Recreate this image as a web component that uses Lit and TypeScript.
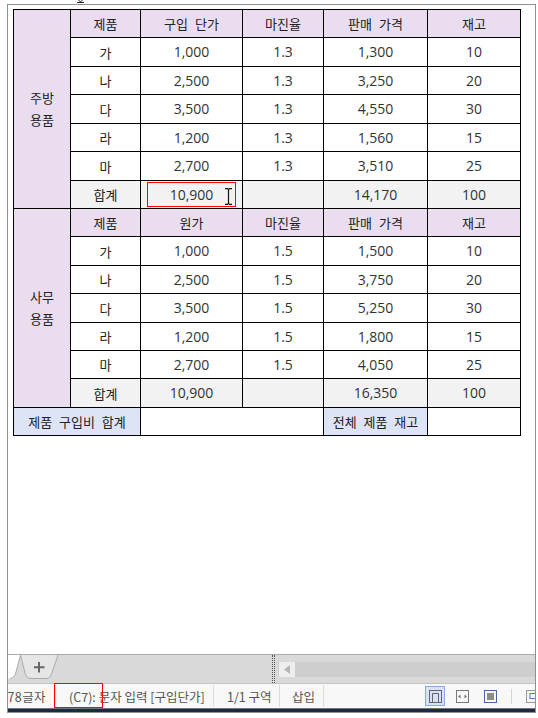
import { LitElement, html, css, svg } from "lit";
import { customElement } from "lit/decorators.js";

const kitchen = [
  ["가", "1,000", "1.3", "1,300", "10"],
  ["나", "2,500", "1.3", "3,250", "20"],
  ["다", "3,500", "1.3", "4,550", "30"],
  ["라", "1,200", "1.3", "1,560", "15"],
  ["마", "2,700", "1.3", "3,510", "25"],
];
const office = [
  ["가", "1,000", "1.5", "1,500", "10"],
  ["나", "2,500", "1.5", "3,750", "20"],
  ["다", "3,500", "1.5", "5,250", "30"],
  ["라", "1,200", "1.5", "1,800", "15"],
  ["마", "2,700", "1.5", "4,050", "25"],
];

@customElement("app-root")
export class AppRoot extends LitElement {
  static styles = css`
    :host {
      display: block;
      width: 538px;
      height: 718px;
      background: #fff;
      position: relative;
      overflow: hidden;
      font-family: "Noto Sans CJK KR", "Open Sans", sans-serif;
      color: #222;
    }
    .frame {
      position: absolute;
      inset: 4px 2px 5px 7px;
      border: 1px solid #8f8f8f;
      display: flex;
      flex-direction: column;
      box-sizing: border-box;
      overflow: hidden;
    }
    .sheet {
      flex: 1;
      padding: 4px 0 0 5px;
      background: #fff;
    }
    .table {
      display: grid;
      box-sizing: border-box;
      grid-template-columns: 57px 70px 102px 81px 104px 93px;
      grid-template-rows: 28px 29px 28px 29px 28px 29px 28px 28px 29px 28px 29px 28px 28px 29px 28px;
      border-left: 1px solid #000;
      border-top: 1px solid #000;
      width: 508px;
      font-size: 13px;
    }
    .c {
      position: relative;
      box-sizing: border-box;
      border-right: 1px solid #000;
      border-bottom: 1px solid #000;
      display: flex;
      align-items: center;
      justify-content: center;
      word-spacing: 4px;
      white-space: nowrap;
      line-height: 1;
    }
    .num {
      font-size: 14px;
      font-family: "Open Sans", "Noto Sans CJK KR", sans-serif;
      color: #333;
    }
    .head { background: #eaddf0; }
    .side {
      background: #eaddf0;
      flex-direction: column;
      gap: 9px;
      padding-bottom: 2px;
      grid-row: span 7;
    }
    .sum { background: #f2f2f2; }
    .total { background: #dde4f6; }
    .span2 { grid-column: span 2; }
    .hl {
      position: absolute;
      left: 6px;
      top: 1px;
      width: 89px;
      height: 25px;
      box-sizing: border-box;
      border: 1px solid #f00;
    }
    .ibeam {
      position: absolute;
      left: 83px;
      top: 7px;
    }
    .tabbar {
      height: 30px;
      box-sizing: border-box;
      border-top: 1px solid #aaa;
      border-bottom: 1px solid #c4c4c4;
      background: #d9d9d9;
      display: flex;
      align-items: center;
      flex: none;
    }
    .tabs { width: 264px; height: 28px; flex: none; display: block; }
    .grip {
      width: 1px;
      height: 28px;
      flex: none;
      margin-right: 3px;
      border-left: 1px dotted #555;
      border-right: 1px dotted #555;
    }
    .track {
      flex: 1;
      height: 15px;
      background: #cecece;
      display: flex;
    }
    .arrow {
      width: 16px;
      height: 15px;
      margin-left: 1px;
      background: #eeeeee;
      display: flex;
      align-items: center;
      justify-content: center;
    }
    .status {
      height: 25px;
      flex: none;
      box-sizing: border-box;
      background: #f8f8f8;
      border-bottom: 1px solid #777;
      display: flex;
      align-items: center;
      font-size: 12.5px;
      color: #555;
      white-space: nowrap;
    }
    .seg {
      height: 22px;
      box-sizing: border-box;
      display: flex;
      align-items: center;
      border-right: 1px solid #dcdcdc;
      overflow: hidden;
      flex: none;
    }
    .s1 { width: 48px; justify-content: flex-end; padding-right: 9px; }
    .s1 span { flex: none; letter-spacing: 0.4px; }
    .s2 { width: 158px; padding-left: 13px; }
    .s3 { width: 66px; padding-left: 13px; }
    .s4 { width: 44px; padding-left: 12px; }
    .views {
      margin-left: 101px;
      display: flex;
      align-items: center;
      height: 22px;
    }
    .sel {
      width: 20px;
      height: 20px;
      box-sizing: border-box;
      background: #d6e2f6;
      border: 1px solid #8ea9e2;
      display: flex;
      align-items: center;
      justify-content: center;
      flex: none;
    }
    .sel svg, .views svg { display: block; flex: none; }
    .v2 { margin-left: 11px; }
    .v3 { margin-left: 15px; }
    .vsep {
      width: 1px;
      height: 15px;
      background: #d4d4d4;
      margin-left: 14px;
      flex: none;
    }
    .v4 { margin-left: 14px; }
    .navy { height: 3px; background: #1b2a44; flex: none; }
    .redbox {
      position: absolute;
      left: 54px;
      top: 683px;
      width: 49px;
      height: 25px;
      box-sizing: border-box;
      border: 1px solid #f00;
    }
    .tick { position: absolute; left: 77px; top: 0; }
  `;

  private row(cells: string[], cls = "") {
    return cells.map(
      (t) => html`<div class="c ${cls} ${/\d/.test(t) ? "num" : ""}">${t}</div>`
    );
  }

  private block(title: string[], head: string[], rows: string[][], sum: string[], highlight: boolean) {
    return html`
      <div class="c side"><span>${title[0]}</span><span>${title[1]}</span></div>
      ${this.row(head, "head")}
      ${rows.map((r) => this.row(r))}
      <div class="c sum">합계</div>
      <div class="c sum num">
        ${sum[0]}
        ${highlight
          ? html`<div class="hl"></div>
              <svg class="ibeam" width="9" height="17" viewBox="0 0 9 17" fill="none" stroke="#111" stroke-width="1.2">
                <path d="M1 .6h2.5l1 1 1-1H8M4.5 1.6v13.8M1 16.4h2.5l1-1 1 1H8" />
              </svg>`
          : ""}
      </div>
      <div class="c sum"></div>
      <div class="c sum num">${sum[1]}</div>
      <div class="c sum num">${sum[2]}</div>
    `;
  }

  render() {
    const tabs = svg`
      <path d="M0 0H12.5L8 17Q7 23 2 23.5H0Z" fill="#fff" />
      <path d="M12.5 0 8 17Q7 23 2 23.5" fill="none" stroke="#aaa" />
      <path d="M12.5 0 17 18Q18.5 23.5 23 23.5H38Q42 23.5 43.5 19L50 0" fill="#e6e6e6" stroke="#aaa" />
      <path d="M31 7V17.5M26 12.2H36.5" stroke="#666" stroke-width="2" fill="none" />
    `;
    return html`
      <svg class="tick" width="7" height="3" viewBox="0 0 7 3" fill="none" stroke="#222"><path d="M0 2.5H7M1.5 0 3.5 2 5.5 0" /></svg>
      <div class="frame">
        <div class="sheet">
          <div class="table">
            ${this.block(["주방", "용품"], ["제품", "구입 단가", "마진율", "판매 가격", "재고"], kitchen, ["10,900", "14,170", "100"], true)}
            ${this.block(["사무", "용품"], ["제품", "원가", "마진율", "판매 가격", "재고"], office, ["10,900", "16,350", "100"], false)}
            <div class="c total span2">제품 구입비 합계</div>
            <div class="c span2"></div>
            <div class="c total">전체 제품 재고</div>
            <div class="c"></div>
          </div>
        </div>
        <div class="tabbar">
          <svg class="tabs" viewBox="0 0 264 28">${tabs}</svg>
          <div class="grip"></div>
          <div class="track">
            <div class="arrow">
              <svg width="6" height="9" viewBox="0 0 6 9"><path d="M6 0V9L0 4.5Z" fill="#b5b5b5" /></svg>
            </div>
          </div>
        </div>
        <div class="status">
          <div class="seg s1"><span>278글자</span></div>
          <div class="seg s2">(C7): 문자 입력 [구입단가]</div>
          <div class="seg s3">1/1 구역</div>
          <div class="seg s4">삽입</div>
          <div class="views">
            <div class="sel">
              <svg width="13" height="13" viewBox="0 0 13 13" fill="none" stroke="#666"><rect x=".5" y=".5" width="12" height="12" /><path d="M3.5 13V3.5H9.5V13" /></svg>
            </div>
            <svg class="v2" width="13" height="13" viewBox="0 0 13 13" fill="none"><rect x=".5" y=".5" width="12" height="12" stroke="#777" /><path d="M2 6.5 4.5 4.5V8.5ZM11 6.5 8.5 4.5V8.5Z" fill="#777" /></svg>
            <svg class="v3" width="13" height="13" viewBox="0 0 13 13" fill="none"><rect x=".5" y=".5" width="12" height="12" stroke="#4a66a8" /><rect x="3" y="3" width="7" height="7" fill="#8c8c8c" /></svg>
            <div class="vsep"></div>
            <svg class="v4" width="13" height="13" viewBox="0 0 13 13" fill="none"><rect x=".5" y=".5" width="12" height="12" stroke="#999" /><rect x="4" y="3.5" width="9" height="5" stroke="#4a7fd0" /></svg>
          </div>
        </div>
        <div class="navy"></div>
      </div>
      <div class="redbox"></div>
    `;
  }
}
